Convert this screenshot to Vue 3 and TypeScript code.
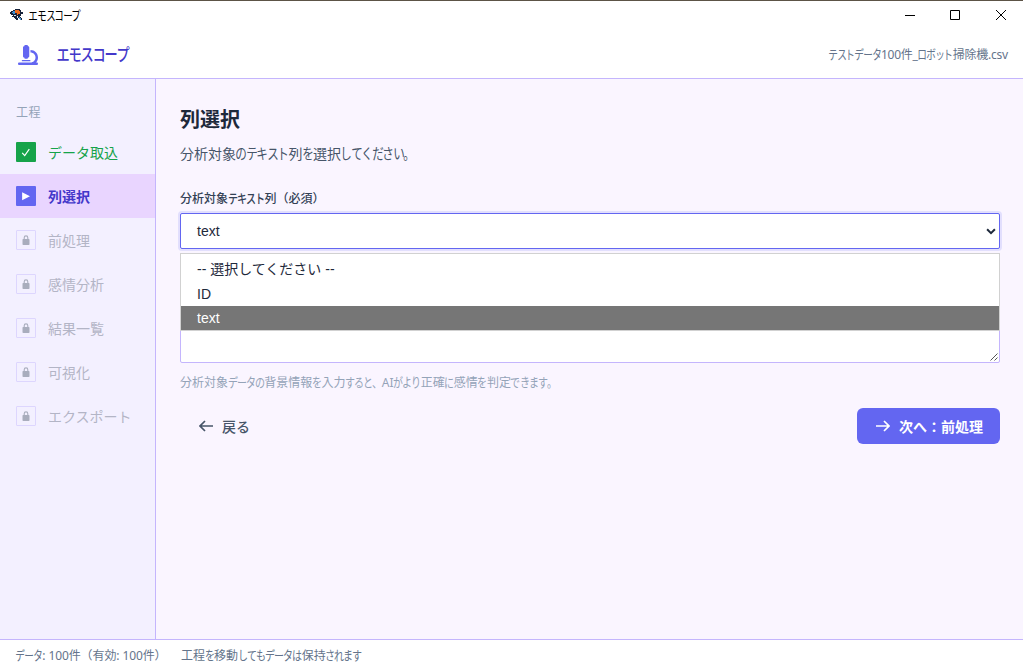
<script setup lang="ts">
import { defineComponent, h } from 'vue'

// Sets kana in a condensed UI width while kanji and Latin keep their natural width.
const UiText = defineComponent({
  props: {
    text: { type: String, required: true },
    size: { type: Number, default: 12 },
    ratio: { type: Number, default: 0.74 },
  },
  setup(props) {
    return () => {
      const runs = props.text.match(/[ぁ-ヿ、。]+|[^ぁ-ヿ、。]+/g) ?? []
      return h('span', { class: 'ui-text', style: { fontSize: `${props.size}px` } }, runs.map((run) => {
        if (!/[ぁ-ヿ、。]/.test(run)) return h('span', run)
        const width = props.size * props.ratio
        return h('span', { class: 'kana' }, [...run].map((c) =>
          h('span', { class: 'kana-cell', style: { width: `${width}px` } }, [
            h('span', { class: 'kana-in', style: { marginLeft: `${(width - props.size) / 2}px`, transform: `scale(${props.ratio * 1.1}, 1.06)` } }, c),
          ]),
        ))
      }))
    }
  },
})

type State = 'done' | 'active' | 'locked'
const steps: { label: string; state: State }[] = [
  { label: 'データ取込', state: 'done' },
  { label: '列選択', state: 'active' },
  { label: '前処理', state: 'locked' },
  { label: '感情分析', state: 'locked' },
  { label: '結果一覧', state: 'locked' },
  { label: '可視化', state: 'locked' },
  { label: 'エクスポート', state: 'locked' },
]
const options = ['-- 選択してください --', 'ID', 'text']
const selected = 'text'
</script>

<template>
  <div class="window">
    <div class="titlebar">
      <svg class="app-icon" width="14" height="14" viewBox="0 0 14 14">
        <path d="M3 2h2V1h5v1h1v2h2v2h-2v2h-1v1h1v1h1v2h-2v-1H9v-1H8v2H6v-1H5v-1H4v-1H2V8h1V7H1V6H0V4h1V3h2z" fill="#17233b" />
        <path d="M2 4h1V3h2v3H3V5H2z" fill="#3f8fd0" />
        <path d="M5 2h4v1h1v3H8v1H7V5H5z" fill="#f26a1b" />
        <path d="M4 7h2v1H4zM7 8h1v2H7z" fill="#dce8f3" />
        <path d="M9 9h1v1h1v2h-1v-1H9z" fill="#4f9bd6" />
      </svg>
      <UiText class="app-name" text="エモスコープ" :ratio="0.72" />
      <div class="controls">
        <svg width="10" height="10" viewBox="0 0 10 10"><path d="M0 5.5h10" /></svg>
        <svg width="10" height="10" viewBox="0 0 10 10"><path d="M.5.5h9v9h-9z" /></svg>
        <svg class="close" width="10" height="10" viewBox="0 0 10 10"><path d="M0 0l10 10M10 0L0 10" /></svg>
      </div>
    </div>

    <header class="header">
      <svg class="logo" width="20" height="20" viewBox="0 0 512 512">
        <path d="M160 32c0-17.7 14.3-32 32-32h32c17.7 0 32 14.3 32 32c17.7 0 32 14.3 32 32V288c0 17.7-14.3 32-32 32c0 17.7-14.3 32-32 32H192c-17.7 0-32-14.3-32-32c-17.7 0-32-14.3-32-32V64c0-17.7 14.3-32 32-32zM32 448H320c70.7 0 128-57.3 128-128s-57.3-128-128-128V128c106 0 192 86 192 192c0 49.2-18.5 94-48.9 128H480c17.7 0 32 14.3 32 32s-14.3 32-32 32H32c-17.7 0-32-14.3-32-32s14.3-32 32-32zm80-64H304c8.8 0 16 7.2 16 16s-7.2 16-16 16H112c-8.8 0-16-7.2-16-16s7.2-16 16-16z" />
      </svg>
      <UiText class="brand" text="エモスコープ" :size="16" :ratio="0.75" />
      <UiText class="filename" text="テストデータ100件_ロボット掃除機.csv" :ratio="0.73" />
    </header>

    <div class="body">
      <nav class="sidebar">
        <div class="nav-title">工程</div>
        <div v-for="s in steps" :key="s.label" class="step" :class="s.state">
          <span class="badge">
            <svg v-if="s.state === 'done'" width="10" height="10" viewBox="0 0 10 10"><path d="M1.2 5.9l2.5 2.7L8.3 2.2" fill="none" stroke="#fff" stroke-width="1.2" /></svg>
            <svg v-else-if="s.state === 'active'" width="10" height="10" viewBox="0 0 10 10"><path d="M1.1 1.2v8L9 5.2z" fill="#fff" /></svg>
            <svg v-else width="8" height="10" viewBox="0 0 8 10"><rect x=".5" y="4" width="7" height="6" rx=".8" fill="#a9adbd" /><path d="M2.2 4.5V2.8a1.8 1.9 0 0 1 3.6 0v1.7" fill="none" stroke="#a9adbd" stroke-width="1.1" /></svg>
          </span>
          <span>{{ s.label }}</span>
        </div>
      </nav>

      <main class="main">
        <h1>列選択</h1>
        <p class="lead"><UiText text="分析対象のテキスト列を選択してください。" :size="14" :ratio="0.75" /></p>
        <div class="label"><UiText text="分析対象テキスト列（必須）" :ratio="0.76" /></div>
        <div class="field">
          <div class="select">
            <span>text</span>
            <svg width="10" height="7" viewBox="0 0 10 7"><path d="M1.1 1.2L5 5.1l3.9-3.9" fill="none" stroke="#1e293b" stroke-width="2" /></svg>
          </div>
          <div class="popup">
            <div v-for="o in options" :key="o" class="option" :class="{ on: o === selected }">{{ o }}</div>
          </div>
        </div>
        <div class="context">
          <svg width="8" height="8" viewBox="0 0 8 8"><path d="M.5 7.5l7-7M4.5 7.5l3-3" fill="none" stroke="#555" stroke-width="1" /></svg>
        </div>
        <div class="hint"><UiText text="分析対象データの背景情報を入力すると、AIがより正確に感情を判定できます。" :ratio="0.757" /></div>
        <div class="actions">
          <div class="back">
            <svg width="14" height="12" viewBox="0 0 14 12"><path d="M14 6H1.2M6 1L1 6l5 5" /></svg>
            <span>戻る</span>
          </div>
          <div class="next">
            <svg width="14" height="12" viewBox="0 0 14 12"><path d="M0 6h12.8M8 1l5 5-5 5" /></svg>
            <span>次へ：前処理</span>
          </div>
        </div>
      </main>
    </div>

    <footer class="footer">
      <UiText class="count" text="データ: 100件（有効: 100件）" :ratio="0.73" />
      <UiText text="工程を移動してもデータは保持されます" :ratio="0.757" />
    </footer>
  </div>
</template>

<style>
.ui-text { display: inline-block; white-space: nowrap; font-family: "Noto Sans", "Noto Sans CJK JP", sans-serif; }
.ui-text .kana-cell { display: inline-block; }
.ui-text .kana-in { display: inline-block; transform-origin: 50% 60%; font-family: "Noto Sans CJK JP", sans-serif; letter-spacing: 0; }
</style>

<style scoped>
.window { box-sizing: border-box; width: 1023px; height: 671px; display: flex; flex-direction: column; overflow: hidden; background: #fff; border-top: 1px solid #5c5346; font-family: "Noto Sans CJK JP", sans-serif; font-size: 14px; color: #1e293b; }
.titlebar { flex: none; box-sizing: border-box; height: 30px; display: flex; align-items: center; padding: 0 17px 2px 10px; }
.app-icon { margin-top: 0; }
.app-name { margin-left: 5px; line-height: 20px; color: #000; }
.controls { margin-left: auto; display: flex; gap: 35px; }
.controls svg { fill: none; stroke: #000; stroke-width: 1; }
.controls .close { margin-left: 1px; }
.header { flex: none; box-sizing: border-box; height: 48px; border-bottom: 1px solid #c4b5fd; display: flex; align-items: center; padding: 0 15px 0 18px; }
.logo { fill: #6366f1; margin-top: 1px; }
.brand { margin-left: 18.5px; color: #4338ca; font-weight: 500; line-height: 24px; }
.filename { margin-left: auto; color: #64748b; line-height: 20px; letter-spacing: -.22px; }
.body { flex: 1; display: flex; min-height: 0; }
.sidebar { box-sizing: border-box; width: 156px; border-right: 1px solid #c4b5fd; background: #f3f0ff; padding-top: 23px; }
.nav-title { height: 20px; line-height: 20px; margin: 0 16px 8px; color: #94a3b8; font-size: 12px; letter-spacing: .4px; }
.step { height: 44px; display: flex; align-items: center; gap: 12px; padding-left: 16px; line-height: 20px; }
.badge { box-sizing: border-box; width: 20px; height: 20px; display: flex; align-items: center; justify-content: center; border-radius: 1px; }
.done { color: #16a34a; }
.done .badge { background: #16a34a; }
.active { background: #e9d5ff; color: #4338ca; font-weight: 700; }
.active .badge { background: #6366f1; }
.locked { color: #b3b5c6; }
.locked .badge { border: 1px solid #ddd6fe; }
.main { flex: 1; background: #faf5ff; padding: 24px 23px 0 24px; }
h1 { margin: 0; height: 32px; line-height: 32px; font-size: 20px; font-weight: 700; }
.lead { margin: 7px 0 0; height: 22px; line-height: 22px; color: #475569; }
.label { margin-top: 24px; height: 20px; line-height: 20px; color: #334155; font-weight: 500; font-size: 12px; }
.field { position: relative; margin-top: 5px; }
.select { box-sizing: border-box; height: 36px; border: 1px solid #6366f1; border-radius: 2px; background: #fff; box-shadow: 0 0 0 2px #e2dffd; display: flex; align-items: center; justify-content: space-between; padding: 0 3px 0 16px; font-family: "Liberation Sans", "Noto Sans CJK JP", sans-serif; }
.popup { position: absolute; top: 40px; left: 0; right: 0; z-index: 1; box-sizing: border-box; height: 78px; padding-top: 3px; background: #fff; border: 1px solid #d1d1d1; font-family: "Liberation Sans", "Noto Sans CJK JP", sans-serif; }
.option { height: 24px; line-height: 24px; padding-left: 16px; }
.option:first-child { height: 25px; line-height: 25px; }
.option.on { background: #767676; color: #fff; }
.context { box-sizing: border-box; height: 80px; margin-top: 34px; border: 1px solid #c4b5fd; border-radius: 2px; background: #fff; display: flex; align-items: flex-end; justify-content: flex-end; padding: 1px; }
.hint { margin-top: 9px; height: 20px; line-height: 20px; color: #94a3b8; font-size: 12px; }
.actions { margin-top: 16px; display: flex; justify-content: space-between; }
.back, .next { height: 36px; display: flex; align-items: center; gap: 9px; padding: 0 17px 0 19px; }
.back { color: #475569; font-weight: 500; }
.next { background: #6366f1; color: #fff; font-weight: 700; border-radius: 6px; }
.actions svg { fill: none; stroke: currentColor; stroke-width: 1.7; }
.footer { flex: none; box-sizing: border-box; height: 32px; border-top: 1px solid #c4b5fd; display: flex; align-items: center; padding-left: 16px; color: #64748b; line-height: 20px; }
.count { width: 165px; letter-spacing: -.1px; }
</style>
